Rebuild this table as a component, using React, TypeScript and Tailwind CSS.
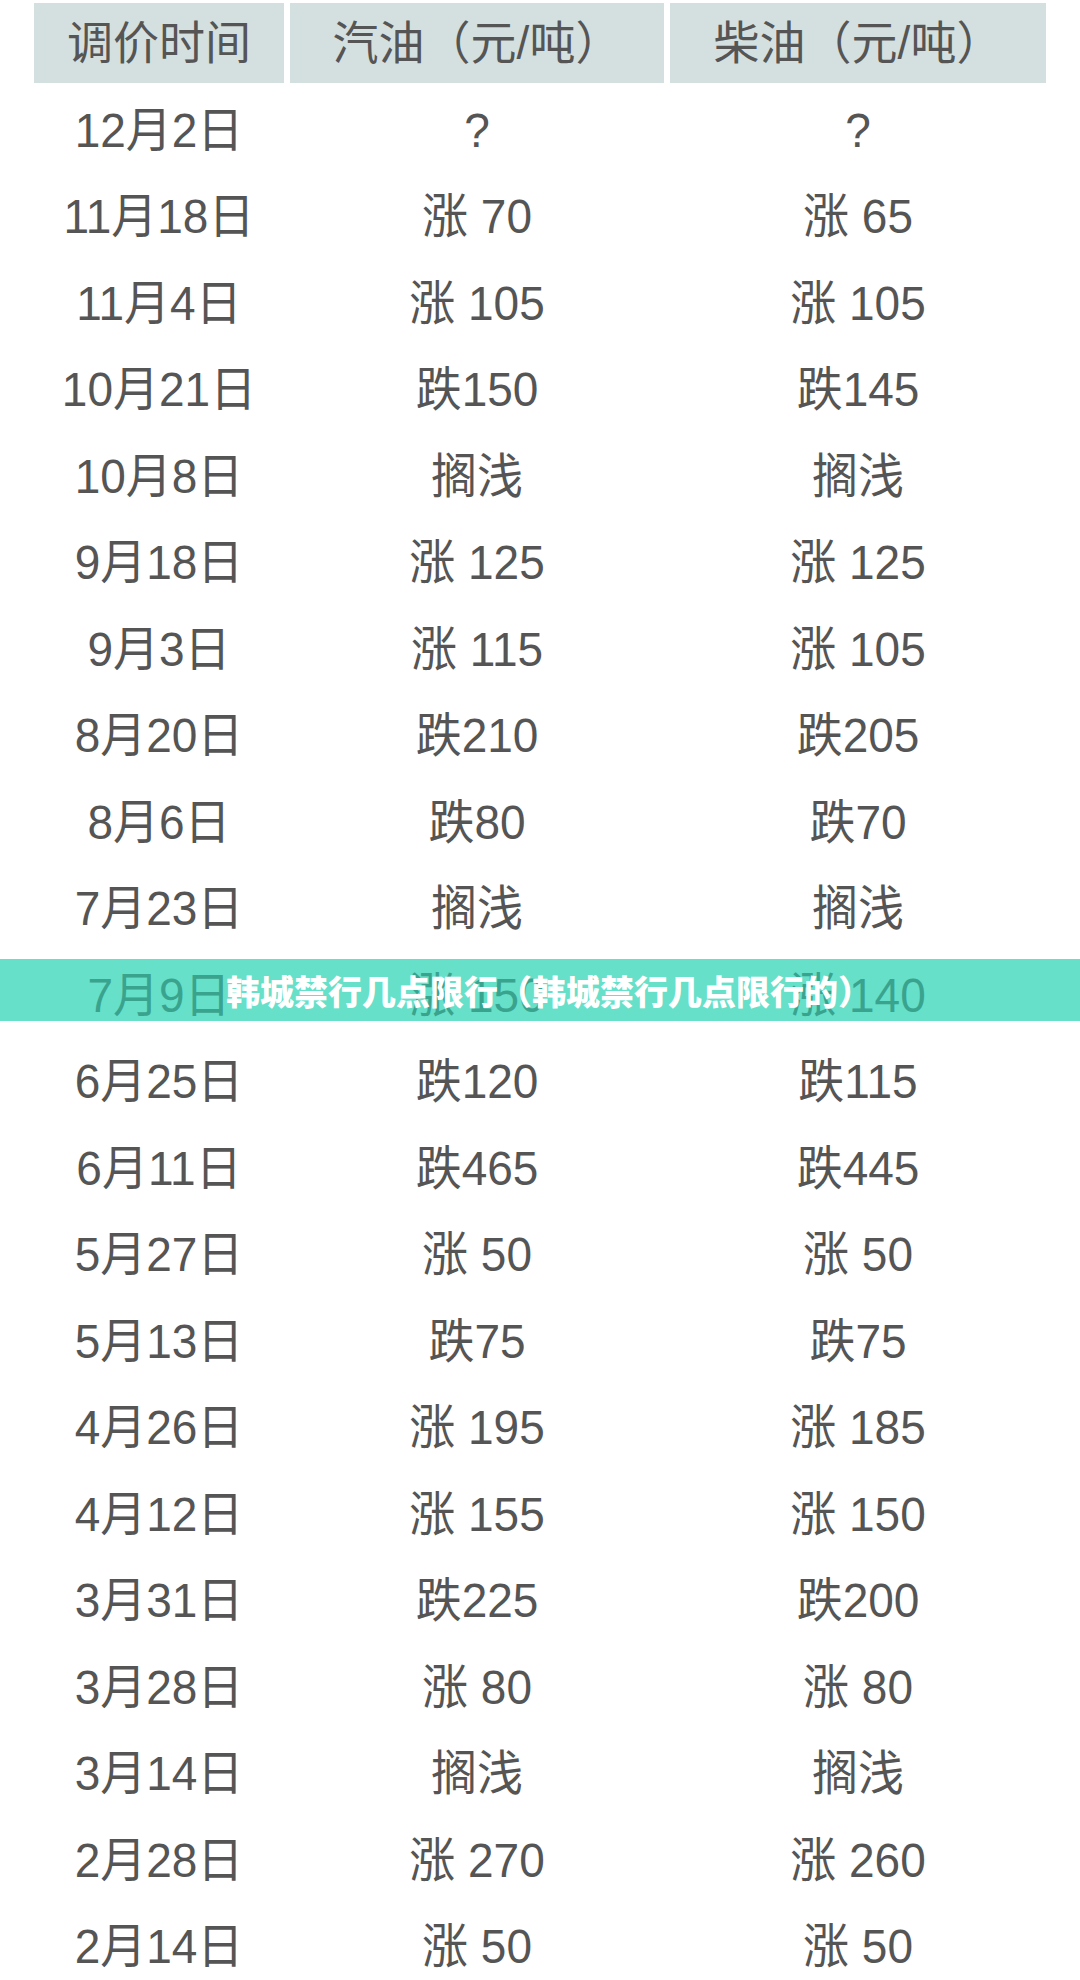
const rows: [string, string, string][] = [
  ["12月2日", "?", "?"],
  ["11月18日", "涨 70", "涨 65"],
  ["11月4日", "涨 105", "涨 105"],
  ["10月21日", "跌150", "跌145"],
  ["10月8日", "搁浅", "搁浅"],
  ["9月18日", "涨 125", "涨 125"],
  ["9月3日", "涨 115", "涨 105"],
  ["8月20日", "跌210", "跌205"],
  ["8月6日", "跌80", "跌70"],
  ["7月23日", "搁浅", "搁浅"],
  ["7月9日", "涨 150", "涨 140"],
  ["6月25日", "跌120", "跌115"],
  ["6月11日", "跌465", "跌445"],
  ["5月27日", "涨 50", "涨 50"],
  ["5月13日", "跌75", "跌75"],
  ["4月26日", "涨 195", "涨 185"],
  ["4月12日", "涨 155", "涨 150"],
  ["3月31日", "跌225", "跌200"],
  ["3月28日", "涨 80", "涨 80"],
  ["3月14日", "搁浅", "搁浅"],
  ["2月28日", "涨 270", "涨 260"],
  ["2月14日", "涨 50", "涨 50"],
];

const font = "font-['Liberation_Sans','Noto_Sans_CJK_SC',sans-serif]";

const App = () => {
  return (
    <div className={`relative w-[1080px] h-[1980px] overflow-hidden bg-white ${font}`}>
      <div className="pt-[3px] pl-[34px]">
        <div className="grid grid-cols-[250px_374px_376px] gap-x-[6px] h-[80px] text-[46px] text-[#555]">
          <div className="bg-[#d4e0df] flex items-center justify-center">调价时间</div>
          <div className="bg-[#d4e0df] flex items-center justify-center">汽油（元/吨）</div>
          <div className="bg-[#d4e0df] flex items-center justify-center">柴油（元/吨）</div>
        </div>
        <div className="mt-[4px] flex flex-col">
          {rows.map(([date, gas, diesel], i) => (
            <div
              key={date}
              className={`grid grid-cols-[250px_374px_376px] gap-x-[6px] h-[86.5px] items-center text-[46px] ${
                i === 10 ? "relative z-10 text-[#3aa38e]" : "text-[#555]"
              }`}
            >
              <div className="flex justify-center">
                <span className="inline-block scale-y-105">{date}</span>
              </div>
              <div className="flex justify-center">
                <span className="inline-block scale-y-105">{gas}</span>
              </div>
              <div className="flex justify-center">
                <span className="inline-block scale-y-105">{diesel}</span>
              </div>
            </div>
          ))}
        </div>
      </div>

      {/* title banner over the table */}
      <div className="absolute left-0 right-0 top-[959px] h-[62px] bg-[#66e0c9]" />
      <div className="absolute left-0 right-0 top-[959px] h-[62px] z-20 flex items-center justify-center pl-[18px] text-[34px] font-black text-white font-['Noto_Sans_CJK_SC',sans-serif]">
        韩城禁行几点限行（韩城禁行几点限行的）
      </div>
    </div>
  );
};

export default App;
